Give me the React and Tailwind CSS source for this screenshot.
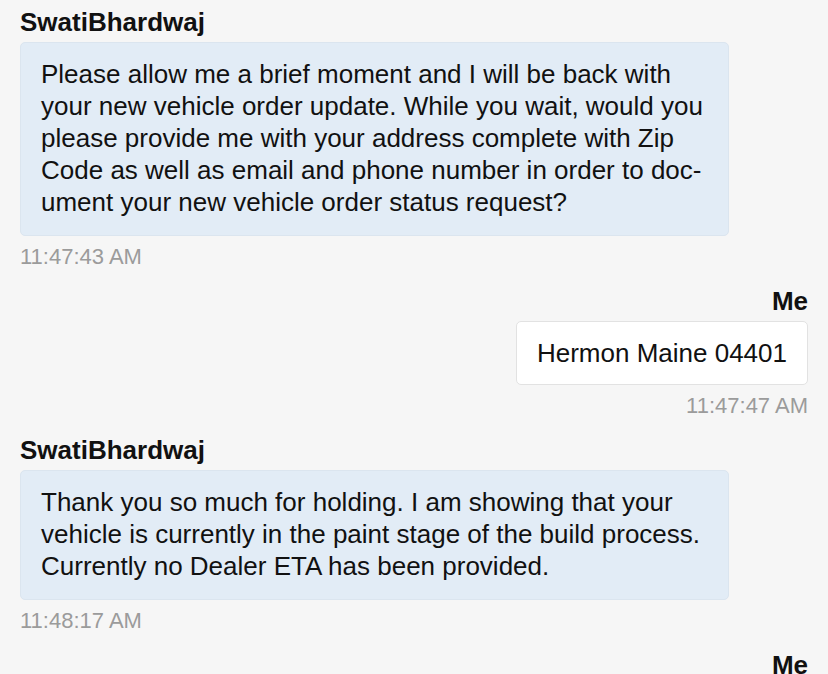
const messages = [
  {
    id: 1,
    from: "SwatiBhardwaj",
    mine: false,
    time: "11:47:43 AM",
    lines: [
      "Please allow me a brief moment and I will be back with",
      "your new vehicle order update. While you wait, would you",
      "please provide me with your address complete with Zip",
      "Code as well as email and phone number in order to doc-",
      "ument your new vehicle order status request?",
    ],
  },
  {
    id: 2,
    from: "Me",
    mine: true,
    time: "11:47:47 AM",
    lines: ["Hermon Maine 04401"],
  },
  {
    id: 3,
    from: "SwatiBhardwaj",
    mine: false,
    time: "11:48:17 AM",
    lines: [
      "Thank you so much for holding. I am showing that your",
      "vehicle is currently in the paint stage of the build process.",
      "Currently no Dealer ETA has been provided.",
    ],
  },
  {
    id: 4,
    from: "Me",
    mine: true,
    time: "",
    lines: [],
  },
];

function Message({ msg }) {
  return (
    <div className={`flex flex-col ${msg.mine ? "items-end" : "items-start"}`}>
      <div className="text-[26px] leading-[28px] font-bold text-[#111]">{msg.from}</div>
      {msg.lines.length > 0 && (
        <>
          <div
            className={`mt-[6px] rounded-[5px] text-[26px] leading-8 text-[#111] ${
              msg.mine
                ? "bg-white border border-[#e2e2e2] px-5 py-[15px]"
                : "w-[709px] bg-[#e2ecf6] border border-[#dbe5ef] px-5 pt-[15px] pb-[17px]"
            }`}
          >
            {msg.lines.map((l, i) => (
              <div key={i} className="whitespace-nowrap">
                {l}
              </div>
            ))}
          </div>
          <div className="mt-[9px] text-[22px] leading-6 text-[#9b9b9b]">{msg.time}</div>
        </>
      )}
    </div>
  );
}

export default function App() {
  return (
    <div
      className="min-h-screen bg-[#f6f6f6] px-5 pt-2"
      style={{ fontFamily: '"Liberation Sans", Arial, sans-serif' }}
    >
      <div className="flex flex-col gap-[18px]">
        {messages.map((m) => (
          <Message key={m.id} msg={m} />
        ))}
      </div>
    </div>
  );
}
